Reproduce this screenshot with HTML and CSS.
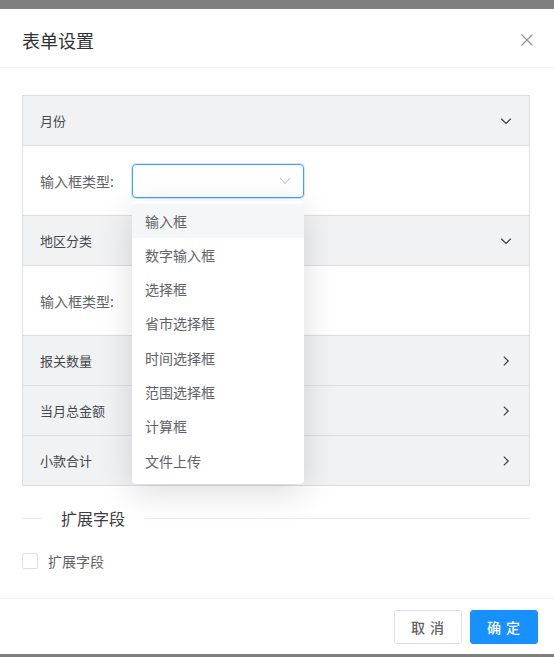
FILE: index.html
```html
<!DOCTYPE html>
<html lang="zh-CN">
<head>
<meta charset="utf-8">
<title>表单设置</title>
<link rel="stylesheet" href="styles.css">
</head>
<body>
<div class="dialog">
  <div class="dialog-header">
    <span class="dialog-title">表单设置</span>
    <svg class="close" width="12" height="12" viewBox="0 0 12 12"><path d="M0.5 0.5 L11.5 11.5 M11.5 0.5 L0.5 11.5" /></svg>
  </div>
  <div class="dialog-body">
    <div class="collapse">
      <div class="c-head">
        <span>月份</span>
        <svg class="arrow" width="12" height="12" viewBox="0 0 12 12"><polyline points="1.2,3.8 6,8.4 10.8,3.8" /></svg>
      </div>
      <div class="c-content">
        <span class="label">输入框类型:</span>
        <div class="select is-focus">
          <svg class="select-arrow" width="12" height="12" viewBox="0 0 12 12"><polyline points="1,3 6,8.5 11,3" /></svg>
          <div class="dropdown">
            <ul class="options">
              <li class="option hover">输入框</li>
              <li class="option">数字输入框</li>
              <li class="option">选择框</li>
              <li class="option">省市选择框</li>
              <li class="option">时间选择框</li>
              <li class="option">范围选择框</li>
              <li class="option">计算框</li>
              <li class="option">文件上传</li>
            </ul>
          </div>
        </div>
      </div>
      <div class="c-head">
        <span>地区分类</span>
        <svg class="arrow" width="12" height="12" viewBox="0 0 12 12"><polyline points="1.2,3.8 6,8.4 10.8,3.8" /></svg>
      </div>
      <div class="c-content">
        <span class="label">输入框类型:</span>
        <div class="select">
          <svg class="select-arrow" width="12" height="12" viewBox="0 0 12 12"><polyline points="1,3 6,8.5 11,3" /></svg>
        </div>
      </div>
      <div class="c-head">
        <span>报关数量</span>
        <svg class="arrow" width="12" height="12" viewBox="0 0 12 12"><polyline points="3.8,1.6 8.2,6 3.8,10.4" /></svg>
      </div>
      <div class="c-head">
        <span>当月总金额</span>
        <svg class="arrow" width="12" height="12" viewBox="0 0 12 12"><polyline points="3.8,1.6 8.2,6 3.8,10.4" /></svg>
      </div>
      <div class="c-head last">
        <span>小款合计</span>
        <svg class="arrow" width="12" height="12" viewBox="0 0 12 12"><polyline points="3.8,1.6 8.2,6 3.8,10.4" /></svg>
      </div>
    </div>
    <div class="divider"><span class="divider-text">扩展字段</span></div>
    <label class="checkbox"><span class="box"></span><span class="checkbox-label">扩展字段</span></label>
  </div>
  <div class="dialog-footer">
    <button class="btn">取 消</button>
    <button class="btn primary">确 定</button>
  </div>
</div>
</body>
</html>
```

FILE: styles.css
```css
* { box-sizing: border-box; }

html, body {
  margin: 0;
  padding: 0;
  background: #7f7f7f;
  font-family: "Noto Sans CJK SC", "Noto Sans", "Liberation Sans", sans-serif;
  color: #606266;
}

.dialog {
  margin-top: 9px;
  height: 645px;
  background: #fff;
  display: flex;
  flex-direction: column;
}

.dialog-header {
  display: flex;
  align-items: center;
  justify-content: space-between;
  padding: 19px 21px 15px 22px;
  border-bottom: 1px solid #efefef;
}

.dialog-title {
  font-size: 18px;
  line-height: 24px;
  color: #303133;
}

.close path {
  stroke: #909399;
  stroke-width: 1.2;
  fill: none;
}

.dialog-body {
  flex: 1;
  padding: 27px 24px 0 22px;
}

.collapse {
  border: 1px solid #dcdfe6;
  border-bottom: none;
}

.c-head {
  height: 50px;
  display: flex;
  align-items: center;
  justify-content: space-between;
  padding: 0 17px 0 17px;
  background: #f1f2f4;
  border-bottom: 1px solid #dcdfe6;
  font-size: 13px;
  color: #45474b;
}

.arrow polyline {
  fill: none;
  stroke: #3a3c40;
  stroke-width: 1.2;
}

.c-content {
  height: 70px;
  display: flex;
  align-items: center;
  padding-left: 17px;
  background: #fff;
  border-bottom: 1px solid #dcdfe6;
}

.label {
  width: 92px;
  flex: none;
  font-size: 14px;
  color: #606266;
}

.select {
  position: relative;
  width: 172px;
  height: 34px;
  border: 1px solid #dcdfe6;
  border-radius: 4px;
  display: flex;
  align-items: center;
  justify-content: flex-end;
  padding-right: 12px;
}

.select.is-focus {
  border-color: #409eff;
  box-shadow: 0 0 0 1px rgba(64, 158, 255, 0.25);
}

.select-arrow polyline {
  fill: none;
  stroke: #c0c4cc;
  stroke-width: 1.1;
}

.dropdown {
  position: absolute;
  top: calc(100% + 4px);
  left: -1px;
  width: 172px;
  background: #fff;
  border-radius: 4px;
  box-shadow: 0 8px 34px rgba(0, 0, 0, 0.14);
  z-index: 10;
}

.options {
  list-style: none;
  margin: 0;
  padding: 3px 0 6px;
}

.option {
  height: 34.3px;
  line-height: 34.3px;
  padding-left: 13px;
  font-size: 14px;
  color: #606266;
}

.option.hover {
  background: #f5f6f8;
}

.divider {
  display: flex;
  align-items: center;
  margin-top: 21px;
}

.divider::before {
  content: "";
  width: 20px;
  border-top: 1px solid #e8e9ec;
}

.divider::after {
  content: "";
  flex: 1;
  border-top: 1px solid #e8e9ec;
}

.divider-text {
  padding: 0 19px 0 19px;
  font-size: 16px;
  line-height: 22px;
  color: #3a3c40;
}

.checkbox {
  display: flex;
  align-items: center;
  margin-top: 22px;
  height: 20px;
}

.box {
  width: 16px;
  height: 16px;
  border: 1px solid #dcdfe6;
  border-radius: 2px;
  background: #fff;
  margin-right: 10px;
}

.checkbox-label {
  font-size: 14px;
  color: #606266;
}

.dialog-footer {
  display: flex;
  justify-content: flex-end;
  gap: 8px;
  padding: 11px 16px 10px;
  border-top: 1px solid #efefef;
}

.btn {
  width: 68px;
  height: 34px;
  border: 1px solid #dcdfe6;
  border-radius: 3px;
  background: #fff;
  color: #606266;
  font-family: inherit;
  font-size: 14px;
  font-weight: 500;
  letter-spacing: 1px;
  padding: 0;
}

.btn.primary {
  background: #1890ff;
  border-color: #1890ff;
  color: #fff;
}
```
